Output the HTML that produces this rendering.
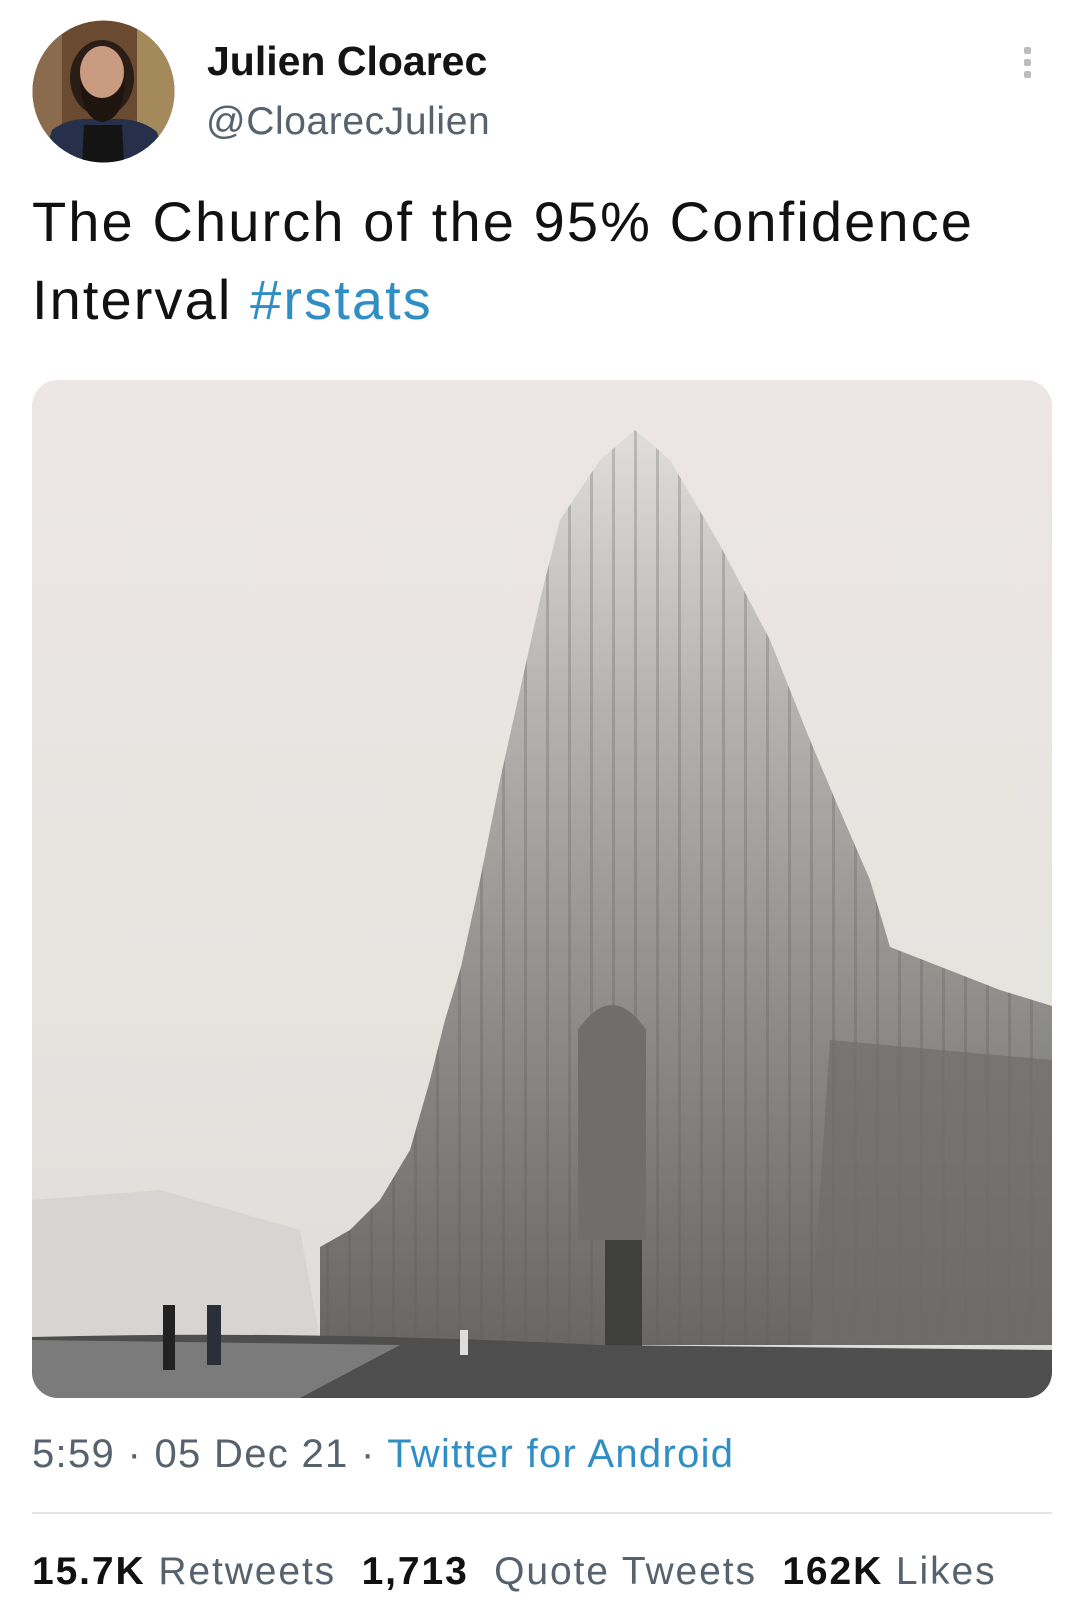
<!DOCTYPE html>
<html><head><meta charset="utf-8">
<style>
html,body{margin:0;padding:0;background:#fff;}
body{width:1080px;height:1622px;position:relative;overflow:hidden;font-family:"Liberation Sans",Arial,sans-serif;}
.t{position:absolute;white-space:nowrap;}
</style></head><body>
<svg class="t" style="left:32px;top:20px" width="143" height="143" viewBox="0 0 143 143">
<defs><clipPath id="c"><circle cx="71.5" cy="71.5" r="71"/></clipPath></defs>
<g clip-path="url(#c)">
<rect width="143" height="143" fill="#6a4a30"/>
<rect x="0" y="0" width="30" height="143" fill="#8b6b4e"/>
<rect x="105" y="0" width="38" height="143" fill="#a48a5a"/>
<path d="M10 143 L20 110 Q40 95 70 100 Q105 95 125 112 L135 143Z" fill="#26304a"/>
<path d="M50 143 L52 105 L90 105 L92 143Z" fill="#141414"/>
<ellipse cx="70" cy="58" rx="32" ry="38" fill="#2a1d16"/>
<ellipse cx="70" cy="52" rx="22" ry="26" fill="#c99b80"/>
<path d="M48 60 Q50 100 70 102 Q92 100 93 60 Q85 78 70 78 Q56 78 48 60Z" fill="#1e1410"/>
</g></svg>
<div class="t" style="left:207px;top:38px;font-size:41px;font-weight:bold;color:#141414;">Julien Cloarec</div>
<div class="t" style="left:206px;top:100px;font-size:39px;color:#56636e;letter-spacing:0.6px;">@CloarecJulien</div>
<div class="t" style="left:1024px;top:47px;width:7px;height:7px;background:#bcbcbc;border-radius:2px"></div>
<div class="t" style="left:1024px;top:59px;width:7px;height:7px;background:#bcbcbc;border-radius:2px"></div>
<div class="t" style="left:1024px;top:71px;width:7px;height:7px;background:#bcbcbc;border-radius:2px"></div>
<div class="t" style="left:32px;top:183px;font-size:56px;line-height:78px;color:#111;letter-spacing:2.1px;">The Church of the 95% Confidence<br>Interval <span style="color:#2f8ec4">#rstats</span></div>

<svg class="t" style="left:32px;top:380px" width="1020" height="1018" viewBox="32 380 1020 1018">
<defs>
<clipPath id="im"><rect x="32" y="380" width="1020" height="1018" rx="26"/></clipPath>
<linearGradient id="bld" x1="0" y1="0" x2="0" y2="1"><stop offset="0" stop-color="#e0dedb"/><stop offset="0.3" stop-color="#b5b3b0"/><stop offset="0.65" stop-color="#8c8b88"/><stop offset="1" stop-color="#686765"/></linearGradient>
<linearGradient id="sky" x1="0" y1="0" x2="0" y2="1"><stop offset="0" stop-color="#ece6e5"/><stop offset="0.6" stop-color="#e6e4df"/><stop offset="1" stop-color="#dddcd9"/></linearGradient>
<pattern id="st" width="22" height="1018" patternUnits="userSpaceOnUse"><rect x="18" width="3" height="1018" fill="#5d5c5a" opacity="0.35"/></pattern>
</defs>
<g clip-path="url(#im)">
<rect x="32" y="380" width="1020" height="1018" fill="url(#sky)"/>
<path d="M32 1200 L160 1190 L300 1230 L320 1340 L32 1340Z" fill="#d6d5d3"/>
<path d="M320 1247 L350 1230 L380 1200 L410 1150 L430 1080 L445 1020 L461 967 L480 880 L500 780 L520 690 L540 600 L560 520 L600 460 L635 430 L670 460 L720 545 L770 640 L810 740 L837 804 L870 880 L890 947 L1000 990 L1052 1006 L1052 1345 L320 1345Z" fill="url(#bld)"/>
<path d="M320 1247 L350 1230 L380 1200 L410 1150 L430 1080 L445 1020 L461 967 L480 880 L500 780 L520 690 L540 600 L560 520 L600 460 L635 430 L670 460 L720 545 L770 640 L810 740 L837 804 L870 880 L890 947 L1000 990 L1052 1006 L1052 1345 L320 1345Z" fill="url(#st)" opacity="0.8"/>
<path d="M830 1040 L1052 1060 L1052 1345 L810 1345Z" fill="#6f6e6c" opacity="0.7"/>
<path d="M578 1240 L578 1030 Q612 980 646 1030 L646 1240Z" fill="#6f6e6c"/>
<rect x="605" y="1240" width="37" height="110" fill="#3f3f3e"/>
<path d="M32 1337 Q300 1330 600 1345 L1052 1350 L1052 1398 L32 1398Z" fill="#4e4e4e"/>
<path d="M32 1340 L400 1345 L300 1398 L32 1398Z" fill="#9a9a9a" opacity="0.6"/>
<rect x="163" y="1305" width="12" height="65" fill="#222"/>
<rect x="207" y="1305" width="14" height="60" fill="#2a2f38"/>
<rect x="460" y="1330" width="8" height="25" fill="#ddd"/>
</g></svg>

<div class="t" style="left:32px;top:1432px;font-size:40px;color:#56636e;letter-spacing:1.3px;">5:59 · 05 Dec 21 · <span style="color:#2f8ec4">Twitter for Android</span></div>
<div class="t" style="left:32px;top:1512px;width:1020px;height:2px;background:#e4e4e4"></div>
<div class="t" style="left:32px;top:1550px;font-size:39px;color:#56636e;letter-spacing:1.9px;"><b style="color:#111">15.7K</b> Retweets&nbsp; <b style="color:#111">1,713</b>&nbsp; Quote Tweets&nbsp; <b style="color:#111">162K</b> Likes</div>
</body></html>
